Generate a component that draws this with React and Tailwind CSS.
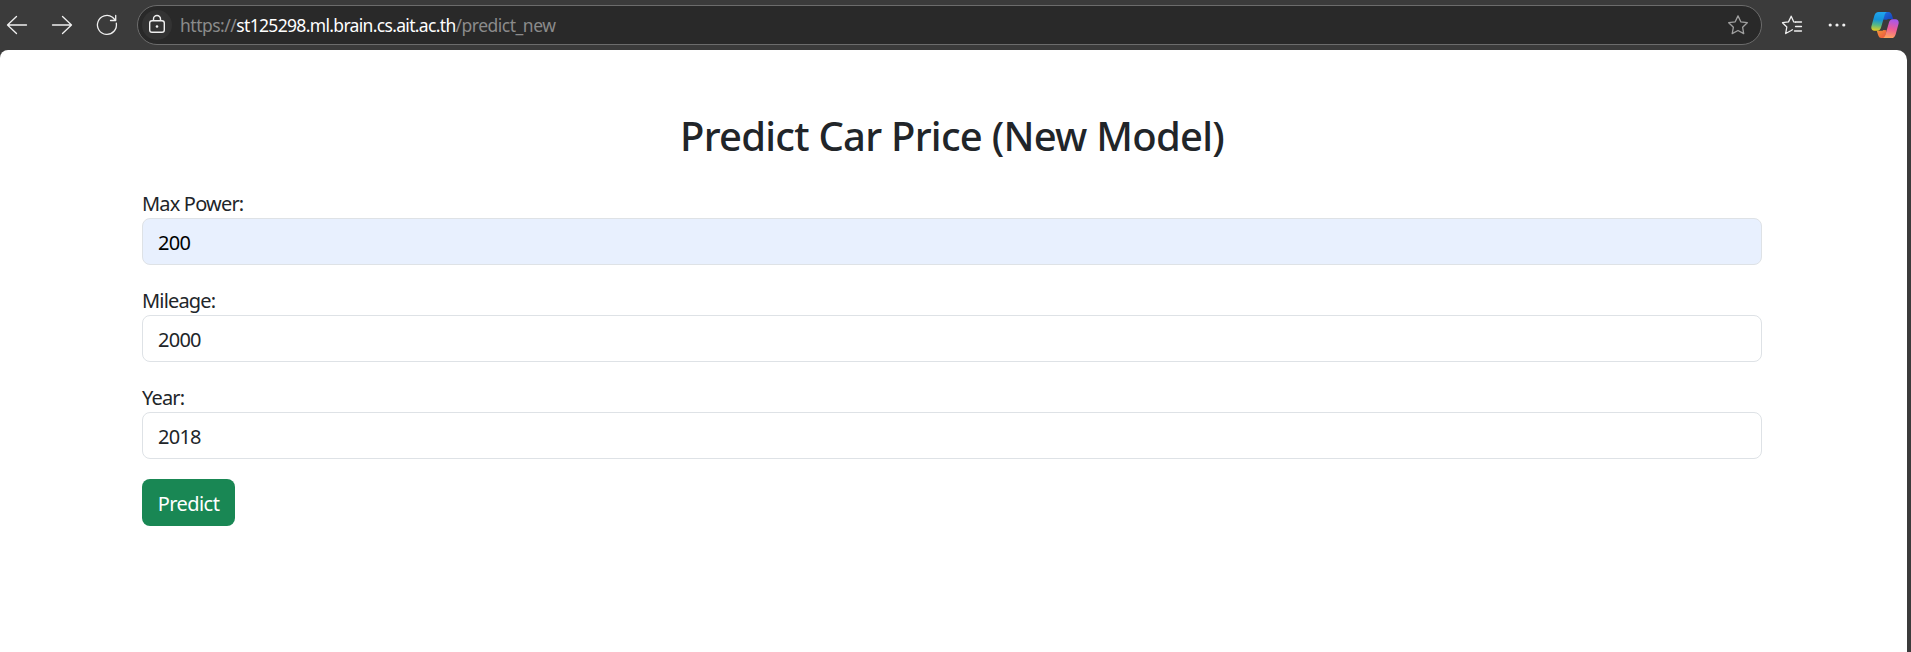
import React from "react";

function Stroke({ className, children }) {
  return (
    <svg viewBox="0 0 24 24" fill="none" stroke="currentColor" strokeWidth="1.3" strokeLinecap="round" strokeLinejoin="round" className={className}>
      {children}
    </svg>
  );
}

const STAR = "M12 2.9l2.8 5.9 6.5.9-4.7 4.5 1.1 6.4-5.7-3.1-5.8 3.1 1.2-6.4-4.7-4.5 6.5-.9z";

function Copilot() {
  return (
    <svg viewBox="0 0 28 26" className="ml-[25px] h-[26px] w-[28px] shrink-0">
      <defs>
        <linearGradient id="left" x1="0.4" y1="0" x2="0.3" y2="1">
          <stop offset="0" stopColor="#20a5ee" />
          <stop offset="0.4" stopColor="#1493d8" />
          <stop offset="0.7" stopColor="#58b884" />
          <stop offset="1" stopColor="#e5cf20" />
        </linearGradient>
        <linearGradient id="right" x1="0.6" y1="0" x2="0.4" y2="1">
          <stop offset="0" stopColor="#a657ed" />
          <stop offset="0.5" stopColor="#ed5b98" />
          <stop offset="1" stopColor="#ffa35c" />
        </linearGradient>
        <linearGradient id="top" x1="0" y1="0" x2="1" y2="1">
          <stop offset="0" stopColor="#1e70e0" />
          <stop offset="1" stopColor="#1840b8" />
        </linearGradient>
        <linearGradient id="bottom" x1="0" y1="0" x2="1" y2="1">
          <stop offset="0" stopColor="#f39a3a" />
          <stop offset="1" stopColor="#ee5040" />
        </linearGradient>
      </defs>
      <path d="M14 0h3.500c2 0 2.900 1.300 3.500 3.300l1.200 3.700h-3.700c-1.500 0-2.300.2-3 .8l-3.500-.3z" fill="url(#top)" />
      <path d="M14 26h-3.500c-2 0-2.900-1.300-3.500-3.300L5.800 18.700h3.700c1.500 0 2.300-.2 3-.8l3 .3z" fill="url(#bottom)" />
      <path d="M7.600 0h9c-1.800.2-2.500 1.600-3 3.300l-3.500 12c-.6 2.200-1.600 3.400-3.900 3.400H3.500C.8 18.700-.2 16.500.5 14L3.400 3.600C4.100 1.200 5.400 0 7.600 0z" fill="url(#left)" />
      <path d="M20.400 26h-9c1.800-.2 2.500-1.600 3-3.300l3.500-12c.6-2.200 1.600-3.400 3.900-3.400h2.700c2.700 0 3.700 2.200 3 4.700l-2.900 10.400c-.7 2.400-2 3.600-4.200 3.600z" fill="url(#right)" />
    </svg>
  );
}

function Toolbar() {
  return (
    <header className="flex h-[50px] shrink-0 items-start bg-[#3b3b3b] text-[#f0f0f0]">
      <div className="flex h-[49px] w-[137px] shrink-0 items-center pl-[5px]">
        <Stroke className="h-6 w-6"><path d="M11.500 3.500L2.500 12l9 8.500M2.500 12H21.500" /></Stroke>
        <Stroke className="ml-[21px] h-6 w-6"><path d="M12.500 3.500l9 8.500-9 8.500M21.500 12H2.500" /></Stroke>
        <Stroke className="ml-[21px] h-6 w-6"><path d="M21.300 10.200A9.500 9.500 0 1 1 17.500 4.200L20.500 7.300M20.700 2.500v5h-5.200" /></Stroke>
      </div>
      <div className="mt-[5px] flex h-[40px] w-[1625px] shrink-0 items-center rounded-full border border-[#6c6c6c] bg-[#292929] pl-[4px] pr-[11px]">
        <span className="flex h-[30px] w-[30px] items-center justify-center rounded-full bg-[#333333]">
          <svg viewBox="0 0 18 20" fill="none" stroke="currentColor" strokeWidth="1.4" className="-mt-[2px] h-5 w-[18px]">
            <rect x="1.700" y="6.700" width="14.600" height="11.600" rx="2.300" />
            <path d="M5.500 6.700V5a3.500 3.500 0 0 1 7 0v1.700" />
            <circle cx="9" cy="12.500" r="1.300" fill="currentColor" stroke="none" />
          </svg>
        </span>
        <div className="-mt-[1px] ml-[8px] flex-1 whitespace-nowrap text-[17.500px] leading-[36px] text-[#8b8b8b]">
          <span className="tracking-[-0.500px]">https://</span>
          <span className="tracking-[-0.670px] text-white">st125298.ml.brain.cs.ait.ac.th</span>
          <span className="tracking-[-0.500px]">/predict_new</span>
        </div>
        <Stroke className="h-6 w-6 text-[#a0a0a0]"><path d={STAR} /></Stroke>
      </div>
      <div className="flex h-[49px] items-center pl-[18px]">
        <Stroke className="h-6 w-6">
          <path d="M15.500 9.200l-1.700-.3L11.200 3.200 8.500 8.900 2.500 9.700l4.300 4.300-1.100 6.500 5.500-3 1.200-.7" />
          <path d="M15.500 9h6M15.500 13.500h6M14.500 18h7" />
        </Stroke>
        <svg viewBox="0 0 18 4" fill="currentColor" className="ml-[24px] h-1 w-[18px]">
          <circle cx="2.200" cy="2" r="1.600" /><circle cx="9" cy="2" r="1.600" /><circle cx="15.800" cy="2" r="1.600" />
        </svg>
        <Copilot />
      </div>
    </header>
  );
}

function Field({ label, value, filled }) {
  return (
    <label className="mb-5 block">
      <span className="block h-[30px] text-[20px] leading-[32px] tracking-[-0.820px]">{label}</span>
      <input
        defaultValue={value}
        className={
          filled
            ? "block h-[47px] w-full rounded-[8px] border border-[#dee2e6] bg-[#e8f0fe] px-[15px] pt-[2px] text-[20px] tracking-[-0.750px] text-black outline-none"
            : "block h-[47px] w-full rounded-[8px] border border-[#dee2e6] bg-white px-[15px] pt-[2px] text-[20px] tracking-[-0.750px] text-[#212529] outline-none"
        }
      />
    </label>
  );
}

export default function App() {
  return (
    <div className="flex h-[652px] w-[1911px] flex-col overflow-hidden bg-[#3b3b3b] font-['Noto_Sans','Open_Sans',sans-serif]">
      <Toolbar />
      <main className="mr-1 flex-1 rounded-tl-[8px] rounded-tr-[10px] bg-white pl-[142px] pr-[145px] pt-[62px] text-[#212529]">
        <h1 className="mb-[28px] text-center text-[40px] font-medium leading-[48px] tracking-[-0.750px]">Predict Car Price (New Model)</h1>
        <form onSubmit={(e) => e.preventDefault()}>
          <Field label="Max Power:" value="200" filled />
          <Field label="Mileage:" value="2000" />
          <Field label="Year:" value="2018" />
          <button className="block h-[47px] w-[93px] rounded-[8px] bg-[#198754] pt-[2px] text-[20px] tracking-[-0.550px] text-white">Predict</button>
        </form>
      </main>
    </div>
  );
}
